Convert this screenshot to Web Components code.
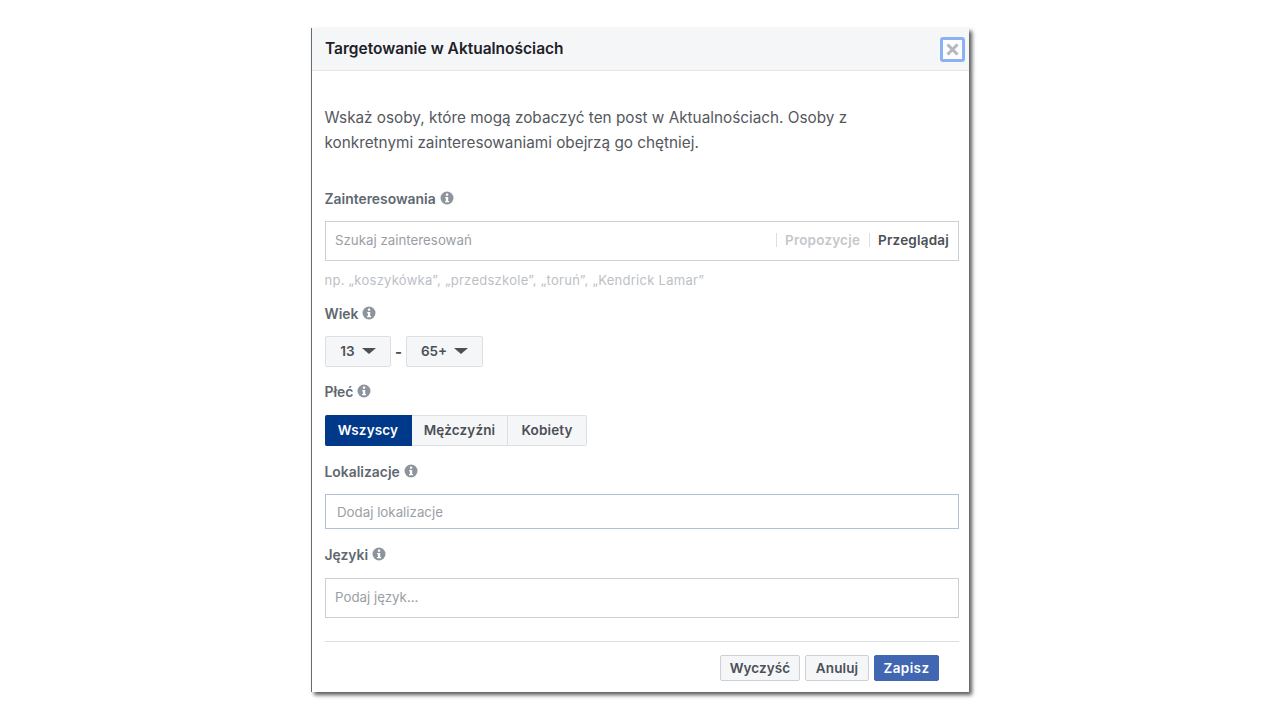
<!DOCTYPE html>
<html lang="pl"><head><meta charset="utf-8"><title>Targetowanie</title>
<style>
html,body{margin:0;padding:0;background:#fff;height:720px;overflow:hidden}
body{font-family:Inter,"Liberation Sans",sans-serif;color:#4b4f56;-webkit-font-smoothing:antialiased}
</style></head><body>
<targeting-dialog></targeting-dialog>
<template id="info-tpl"><style>:host{display:inline-flex;width:14px;height:14px}svg{display:block}</style>
<svg width="14" height="14" viewBox="0 0 14 14"><circle cx="7" cy="7" r="6.5" fill="#8d949e"/><rect x="5.9" y="2.6" width="2.3" height="2.2" rx=".6" fill="#fff"/><path d="M5.2 6h3v4.1h.9v1.2H5v-1.2h.9V7.2h-.7z" fill="#fff"/></svg></template>
<script>
const def=(n,html)=>customElements.define(n,class extends HTMLElement{constructor(){super();this.attachShadow({mode:'open'}).innerHTML=html;}});
def('info-icon',document.getElementById('info-tpl').innerHTML);
def('field-label',`<style>:host{display:flex;align-items:center;gap:4px;height:18px;margin-left:-.5px;font-size:13.9px;font-weight:600;color:#606770;line-height:18px}info-icon{position:relative;top:-1px}</style><slot></slot><info-icon></info-icon>`);
def('text-box',`<style>:host{display:flex;align-items:center;box-sizing:border-box;border:1px solid #ccd0d5;background:#fff;height:40px;padding:0 9px 2px;font-size:13.3px;color:#9a9ea5}:host([focus]){border-color:#b2c0d8;height:35px;padding:0 11px}.t{flex:1}</style><span class="t"><slot></slot></span><slot name="end"></slot>`);
def('drop-button',`<style>:host{display:inline-flex;align-items:center;justify-content:center;gap:7px;box-sizing:border-box;height:31px;padding-bottom:2px;border:1px solid #dddfe2;border-radius:2px;background:#f5f6f7;font-size:13.5px;font-weight:600;color:#4b4f56}i{display:block;width:0;height:0;border-left:7px solid transparent;border-right:7px solid transparent;border-top:6px solid #4b4f56;margin-top:1px}</style><slot></slot><i></i>`);
def('seg-button',`<style>:host{display:flex;align-items:center;justify-content:center;box-sizing:border-box;height:31px;padding-bottom:2px;background:#f5f6f7;border:1px solid #dddfe2;border-left:0;font-size:13.5px;font-weight:600;color:#4b4f56;letter-spacing:.15px}:host([on]){background:#00388a;border-color:#00388a;color:#fff;border-radius:2px 0 0 2px}:host(:last-child){border-radius:0 2px 2px 0}</style><slot></slot>`);
def('act-button',`<style>:host{display:flex;align-items:center;justify-content:center;box-sizing:border-box;height:26px;padding-bottom:1px;background:#f5f6f7;border:1px solid #ced0d4;border-radius:2px;font-size:13.5px;font-weight:600;color:#4b4f56;letter-spacing:.1px}:host([primary]){background:#4267b2;border-color:#4267b2;color:#fff;letter-spacing:.4px}</style><slot></slot>`);
def('targeting-dialog',`<style>
:host{display:block;box-sizing:border-box;width:658px;height:664px;margin:28px 0 0 311px;background:#fff;border-left:1px solid #6b6b6b;box-shadow:3px 3px 4px rgba(0,0,0,.65)}
header{display:flex;align-items:center;justify-content:space-between;box-sizing:border-box;height:43px;background:#f5f6f7;border-bottom:1px solid #e5e5e5;padding:0 4px 0 13px}
h1{margin:0;font-size:15.5px;font-weight:600;color:#1d2129;line-height:18px}
.x{display:flex;align-items:center;justify-content:center;box-sizing:border-box;width:25px;height:25px;margin-top:1px;border:3px solid #8cb0f5;border-radius:3px;background:#fdfdfe}
main{display:flex;flex-direction:column;padding:34px 10px 0 13px}
p{margin:0 0 0 -.5px;max-width:540px;font-size:15.3px;line-height:25px;color:#55585e;height:50px}
.hint{font-size:13px;color:#bcc0c6;line-height:16px;margin-top:11px;margin-left:-.5px;letter-spacing:.27px}
.tabs{display:flex;align-items:center;font-size:13.5px;font-weight:600;letter-spacing:.2px}
.tabs span{display:block;line-height:14px;padding-left:8px;border-left:1px solid #dddfe2;margin-left:9px}
.tabs .off{color:#c4c7cc}.tabs .cur{color:#4b4f56}
.row{display:flex;align-items:center}
.dash{width:15px;text-align:center;font-size:15px;font-weight:700}
hr{margin:23px 0 0;border:0;border-top:1px solid #dddfe2}
footer{display:flex;justify-content:flex-end;gap:5px;margin:13px 20px 0 0}
</style>
<header><h1>Targetowanie w Aktualnościach</h1><div class="x"><svg width="15" height="15" viewBox="0 0 15 15"><path d="M2.5 2.5l10 10M12.5 2.5l-10 10" stroke="#b4b7bd" stroke-width="3"/></svg></div></header>
<main>
<p>Wskaż osoby, które mogą zobaczyć ten post w Aktualnościach. Osoby z konkretnymi zainteresowaniami obejrzą go chętniej.</p>
<field-label style="margin-top:35px">Zainteresowania</field-label>
<text-box style="margin-top:13px">Szukaj zainteresowań<div slot="end" class="tabs"><span class="off">Propozycje</span><span class="cur">Przeglądaj</span></div></text-box>
<div class="hint">np. „koszykówka”, „przedszkole”, „toruń”, „Kendrick Lamar”</div>
<field-label style="margin-top:17px">Wiek</field-label>
<div class="row" style="margin-top:13px"><drop-button style="width:66px">13</drop-button><span class="dash">-</span><drop-button style="width:77px">65+</drop-button></div>
<field-label style="margin-top:16px">Płeć</field-label>
<div class="row" style="margin-top:14px"><seg-button on style="width:87px">Wszyscy</seg-button><seg-button style="width:96px">Mężczyźni</seg-button><seg-button style="width:79px">Kobiety</seg-button></div>
<field-label style="margin-top:17px">Lokalizacje</field-label>
<text-box focus style="margin-top:13px">Dodaj lokalizacje</text-box>
<field-label style="margin-top:17px">Języki</field-label>
<text-box style="margin-top:14px">Podaj język...</text-box>
<hr>
<footer><act-button style="width:80px">Wyczyść</act-button><act-button style="width:64px">Anuluj</act-button><act-button primary style="width:65px">Zapisz</act-button></footer>
</main>`);
</script>
</body></html>
